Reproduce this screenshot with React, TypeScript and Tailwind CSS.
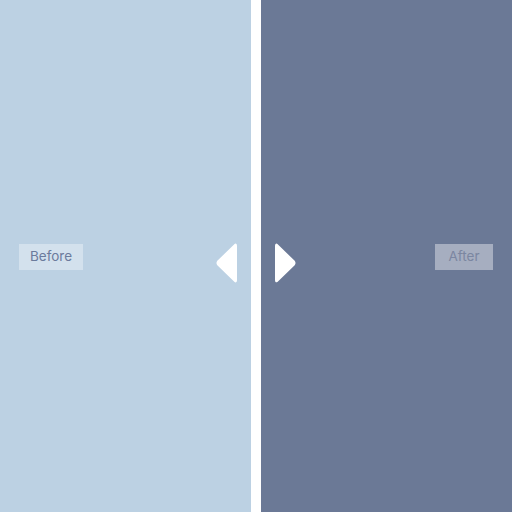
const ArrowLeft = () => (
  <svg width="22" height="40" viewBox="0 0 22 40">
    <path
      d="M19 2 Q20 1 20 3 L20 37 Q20 39 19 38 L2 21.5 Q1 20 2 18.5 Z"
      fill="#ffffff"
      stroke="#ffffff"
      strokeWidth="2"
      strokeLinejoin="round"
    />
  </svg>
);

const ArrowRight = () => (
  <svg width="22" height="40" viewBox="0 0 22 40">
    <path
      d="M3 2 Q2 1 2 3 L2 37 Q2 39 3 38 L20 21.5 Q21 20 20 18.5 Z"
      fill="#ffffff"
      stroke="#ffffff"
      strokeWidth="2"
      strokeLinejoin="round"
    />
  </svg>
);

export default function App() {
  return (
    <div
      className="relative flex h-[512px] w-[512px] overflow-hidden bg-white"
      style={{ fontFamily: "Inter, 'Noto Sans', sans-serif" }}
    >
      <div className="flex w-[251px] items-center bg-[#bcd1e3] pl-[19px]">
        <span className="mt-[1px] flex h-[26px] w-[64px] items-center justify-center bg-white/35 text-[13.5px] text-[#6b7b9c]">
          Before
        </span>
      </div>
      <div className="w-[10px] bg-white" />
      <div className="flex flex-1 items-center justify-end bg-[#6b7996] pr-[19px]">
        <span className="mt-[1px] flex h-[26px] w-[58px] items-center justify-center bg-white/40 text-[13.5px] text-[#7b86a1]">
          After
        </span>
      </div>
      <div className="absolute left-[216px] top-[243px]">
        <ArrowLeft />
      </div>
      <div className="absolute left-[274px] top-[243px]">
        <ArrowRight />
      </div>
    </div>
  );
}
